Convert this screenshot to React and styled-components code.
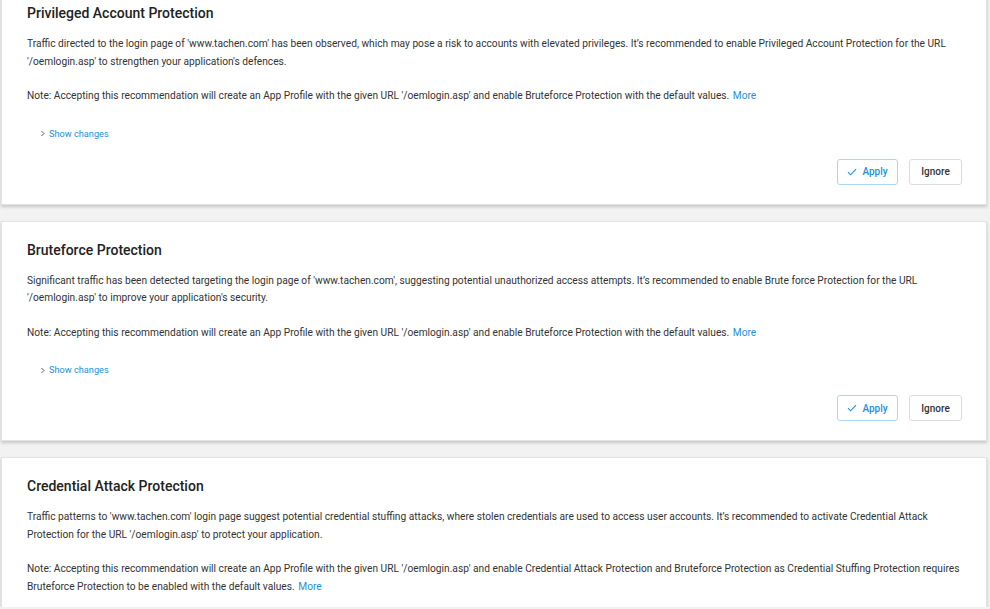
import React from "react";
import styled, { createGlobalStyle } from "styled-components";

const Global = createGlobalStyle`
  html, body { margin: 0; padding: 0; background: #f2f2f2; }
  body { font-family: Roboto, "Liberation Sans", Arial, sans-serif; color: #333; overflow: hidden; }
`;

const Viewport = styled.main`
  height: 607px;
  overflow: hidden;
`;

const List = styled.div`
  display: flex;
  flex-direction: column;
  gap: 16px;
  padding: 0 3px 0 1px;
  margin-top: -16px;
`;

const Card = styled.section`
  background: #fff;
  border: 1px solid #e3e3e3;
  box-shadow: 0 2px 3px rgba(0, 0, 0, 0.18);
  padding: 18px 24px 19px 25px;
  display: flex;
  flex-direction: column;
  flex-shrink: 0;
`;

const Title = styled.h2`
  margin: 0;
  font-size: 14px;
  line-height: 20px;
  font-weight: 500;
  color: #222;
`;

const Para = styled.p`
  margin: ${(p) => p.$mt || 0}px 0 0;
  font-size: 10.2px;
  line-height: 17.5px;
  color: #333;
`;

const More = styled.a`
  color: #1e90dc;
  text-decoration: none;
  margin-left: 1px;
`;

const Toggle = styled.button`
  display: flex;
  align-items: center;
  gap: 3px;
  margin: 22px 0 0 13px;
  padding: 0;
  border: 0;
  background: none;
  font-family: inherit;
  font-size: 9.2px;
  line-height: 14px;
  color: #1e90dc;
  cursor: pointer;
  align-self: flex-start;
`;

const Actions = styled.div`
  display: flex;
  justify-content: flex-end;
  gap: 11px;
  margin-top: 18px;
`;

const Button = styled.button`
  display: flex;
  align-items: center;
  justify-content: center;
  gap: 5px;
  height: 26px;
  width: ${(p) => p.$w}px;
  border-radius: 3px;
  background: #fff;
  font-family: inherit;
  font-size: 10px;
  font-weight: 500;
  border: 1px solid ${(p) => (p.$primary ? "#a9d6f5" : "#dcdcdc")};
  color: ${(p) => (p.$primary ? "#1e90dc" : "#333")};
  cursor: pointer;
`;

const Chevron = () => (
  <svg width="6" height="7" viewBox="0 0 6 7" fill="none">
    <path d="M1.5 1l2.5 2.5L1.5 6" stroke="#555" strokeWidth="1" />
  </svg>
);

const Check = () => (
  <svg width="10" height="8" viewBox="0 0 10 8" fill="none">
    <path d="M1 4.2l2.6 2.6L9 1.2" stroke="#1e90dc" strokeWidth="1.1" />
  </svg>
);

const cards = [
  {
    title: "Privileged Account Protection",
    desc: "Traffic directed to the login page of 'www.tachen.com' has been observed, which may pose a risk to accounts with elevated privileges. It’s recommended to enable Privileged Account Protection for the URL '/oemlogin.asp' to strengthen your application's defences.",
    note: "Note: Accepting this recommendation will create an App Profile with the given URL '/oemlogin.asp' and enable Bruteforce Protection with the default values.",
  },
  {
    title: "Bruteforce Protection",
    desc: "Significant traffic has been detected targeting the login page of 'www.tachen.com', suggesting potential unauthorized access attempts. It’s recommended to enable Brute force Protection for the URL '/oemlogin.asp' to improve your application's security.",
    note: "Note: Accepting this recommendation will create an App Profile with the given URL '/oemlogin.asp' and enable Bruteforce Protection with the default values.",
  },
  {
    title: "Credential Attack Protection",
    desc: "Traffic patterns to 'www.tachen.com' login page suggest potential credential stuffing attacks, where stolen credentials are used to access user accounts. It’s recommended to activate Credential Attack Protection for the URL '/oemlogin.asp' to protect your application.",
    note: "Note: Accepting this recommendation will create an App Profile with the given URL '/oemlogin.asp' and enable Credential Attack Protection and Bruteforce Protection as Credential Stuffing Protection requires Bruteforce Protection to be enabled with the default values.",
  },
];

export default function App() {
  return (
    <>
      <Global />
      <Viewport>
        <List>
          {cards.map((c) => (
            <Card key={c.title}>
              <Title>{c.title}</Title>
              <Para $mt={12}>{c.desc}</Para>
              <Para $mt={17}>
                {c.note} <More href="#">More</More>
              </Para>
              <Toggle>
                <Chevron />
                Show changes
              </Toggle>
              <Actions>
                <Button $primary $w={61}>
                  <Check />
                  Apply
                </Button>
                <Button $w={53}>Ignore</Button>
              </Actions>
            </Card>
          ))}
        </List>
      </Viewport>
    </>
  );
}
